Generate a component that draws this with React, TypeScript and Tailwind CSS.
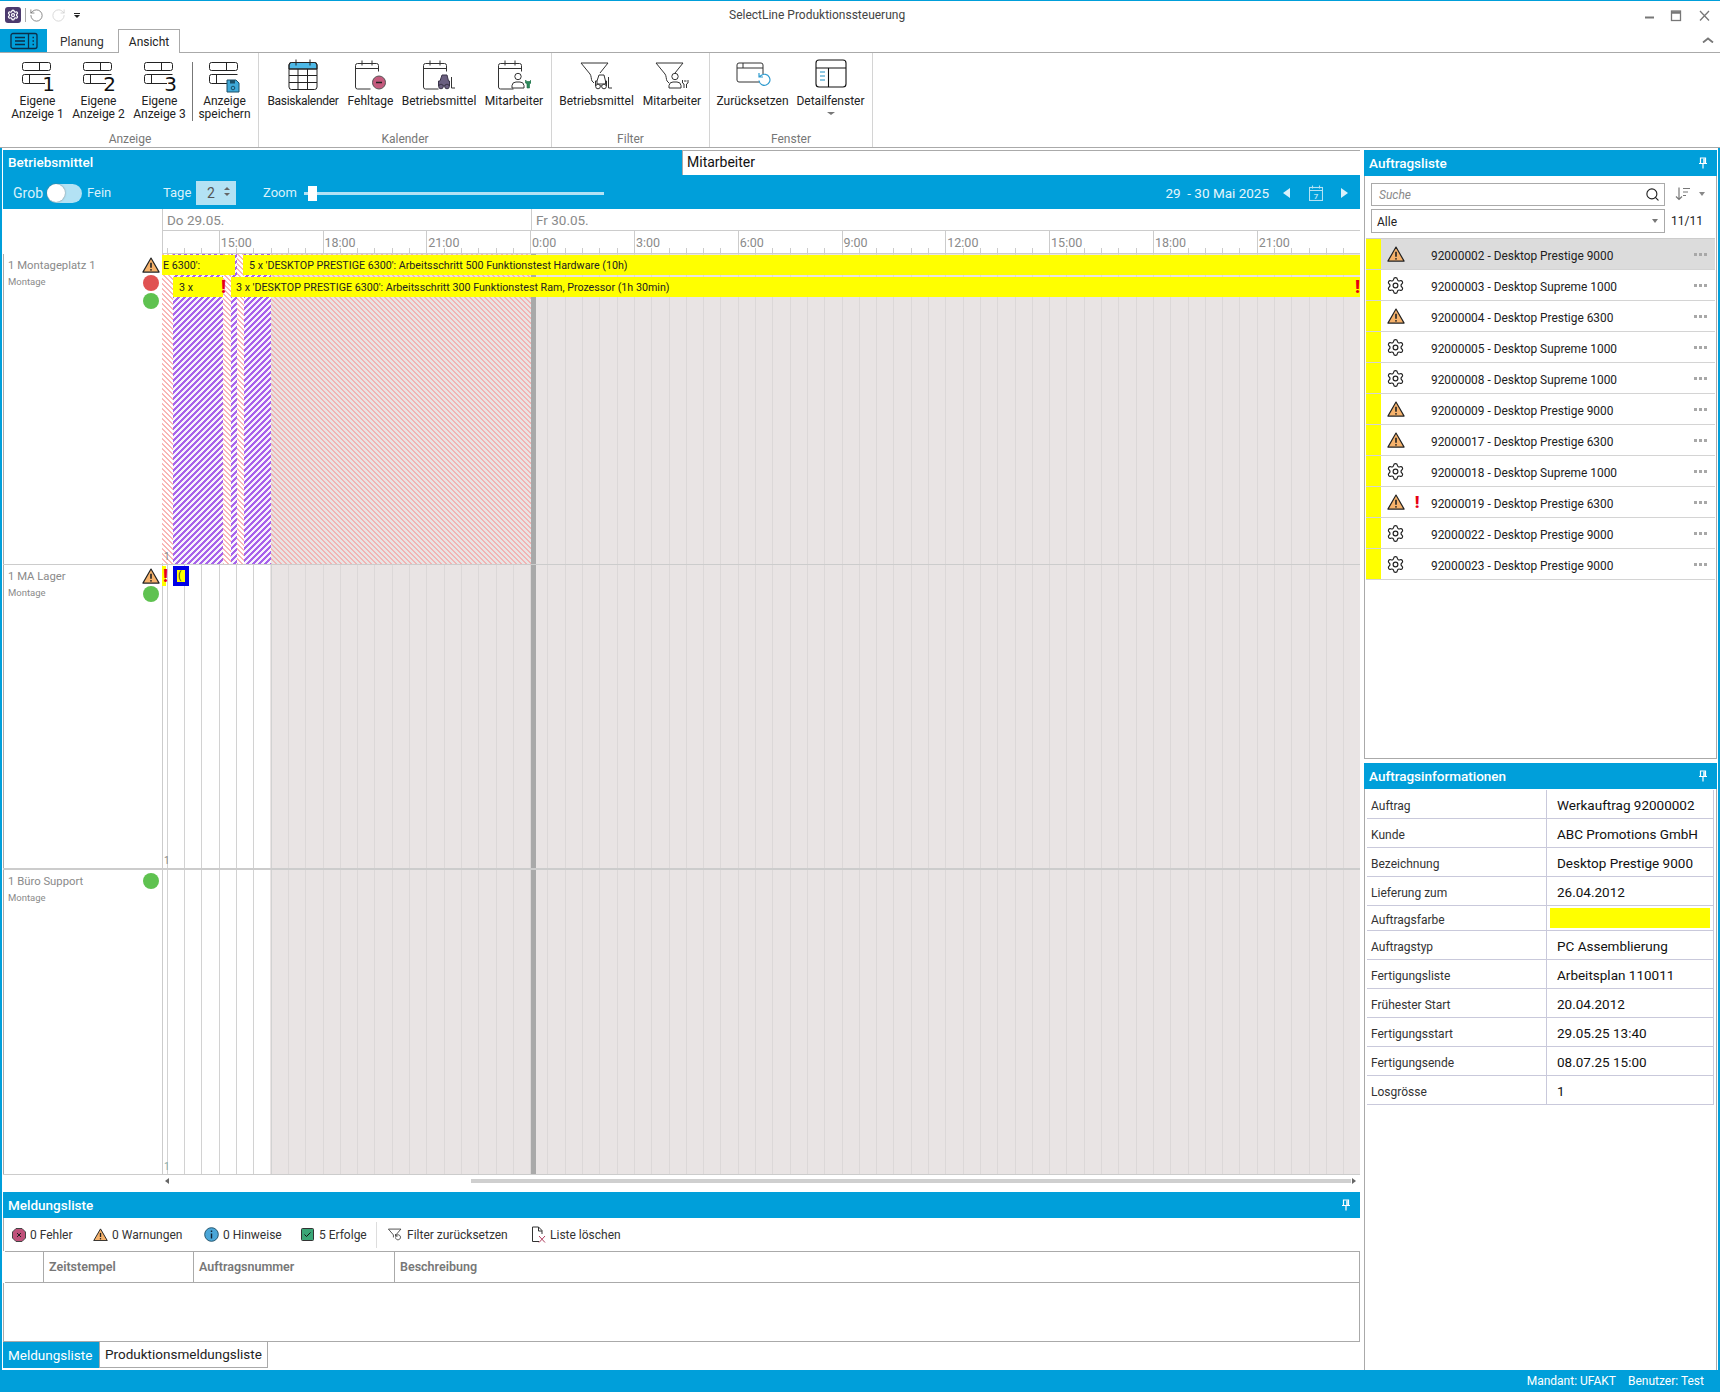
import React from "react";
import { Settings, Search, RotateCcw, RotateCw } from "lucide-react";

function Layers({ n, save }: { n?: string; save?: boolean }) {
  return (
    <svg width="38" height="36" viewBox="0 0 38 36" fill="none" stroke="#222" strokeWidth="1" className="overflow-visible">
      <rect x="3.500" y="3.500" width="28" height="8" rx="2" />
      <line x1="20.500" y1="3.500" x2="20.500" y2="11.500" />
      <path d="M26 24.500H5.500a2 2 0 0 1-2-2v-5a2 2 0 0 1 2-2H31.500" />
      <line x1="10.500" y1="15.500" x2="10.500" y2="24.500" />
      {n && <text x="36" y="32" textAnchor="end" fontSize="20" fill="#111" stroke="none" fontFamily="'DejaVu Sans',sans-serif">{n}</text>}
      {save && (
        <g>
          <path d="M21 21h9l3 3v9H21z" fill="#3fa9d8" stroke="#1a4f68" />
          <rect x="24" y="21" width="5" height="3.500" fill="#1a4f68" stroke="none" />
          <circle cx="27" cy="29" r="1.800" stroke="#1a4f68" />
        </g>
      )}
    </svg>
  );
}

function CalBase({ children }: { children?: React.ReactNode }) {
  return (
    <svg width="34" height="32" viewBox="0 0 34 32" fill="none" stroke="#333" strokeWidth="1">
      <path d="M3.500 4.500h19a2 2 0 0 1 2 2v6M3.500 4.500a2 2 0 0 0-2 2V28a2 2 0 0 0 2 2h13M1.500 9.500h23" />
      <path d="M8 1.500v5M18 1.500v5" />
      {children}
    </svg>
  );
}

function Forklift({ filled }: { filled?: boolean }) {
  const fill = filled ? "#6a5f80" : "none";
  const st = filled ? "#3a3448" : "#333";
  return (
    <g>
      <path d="M18 25v-3l2-6h5l1.500 6v3z" fill={fill} stroke={st} />
      <path d="M18 22h-1.500v5h11v-5h-1" fill={fill} stroke={st} />
      <circle cx="19" cy="27.500" r="2.300" fill={filled ? "#6a5f80" : "#fff"} stroke={st} />
      <circle cx="25" cy="27.500" r="2.300" fill={filled ? "#6a5f80" : "#fff"} stroke={st} />
      <path d="M29.500 18v11h3.500" stroke="#333" />
    </g>
  );
}

function Worker({ filled }: { filled?: boolean }) {
  return (
    <g>
      <circle cx="21" cy="17.500" r="3.200" />
      <path d="M15 29v-2.500a4 4 0 0 1 4-3.500h4a4 4 0 0 1 4 3.500V29z" />
      {filled ? (
        <path d="M28.500 21v3l1.500 1v4h2.500v-4l1.500-1v-3l-1 1.500h-3z" fill="#2d8a5b" stroke="#1e6e46" strokeWidth="0.600" />
      ) : (
        <path d="M28.500 21v3l1.500 1v4M34 21v3l-1.500 1v4M30 22h2.500" stroke="#333" />
      )}
    </g>
  );
}

function BasisCal() {
  return (
    <svg width="32" height="32" viewBox="0 0 32 32" fill="none" stroke="#222" strokeWidth="1">
      <path d="M2 10V6a2.500 2.500 0 0 1 2.500-2.500h23A2.500 2.500 0 0 1 30 6v4z" fill="#4db8e6" />
      <rect x="2" y="3.500" width="28" height="27" rx="2.500" />
      <path d="M2 10h28M2 16.500h28M2 23.500h28M11 10v20.500M20.500 10v20.500M9 0.500v6M23 0.500v6" />
    </svg>
  );
}

function Fehl() {
  return (
    <CalBase>
      <circle cx="25" cy="23.500" r="6.500" fill="#c45a7d" stroke="#555" />
      <path d="M22 23.500h6" stroke="#222" strokeWidth="1.500" />
    </CalBase>
  );
}

function FunnelIcon({ children }: { children?: React.ReactNode }) {
  return (
    <svg width="36" height="32" viewBox="0 0 36 32" fill="none" stroke="#333" strokeWidth="1">
      <path d="M2 4h27l-8 10M2 4l9 11c1.500 2 1 5 2 7l2 2" />
      {children}
    </svg>
  );
}

function ResetWin() {
  return (
    <svg width="36" height="32" viewBox="0 0 36 32" fill="none" stroke="#333" strokeWidth="1">
      <path d="M24 23H4a2 2 0 0 1-2-2V6a2 2 0 0 1 2-2h22a2 2 0 0 1 2 2v9M2 9h26M8 4v5" />
      <path d="M24 21.500a5.500 5.500 0 1 0 2-5l-2 1.500M24 14v4h4" stroke="#2f9bcf" strokeWidth="1.200" />
    </svg>
  );
}

function DetailWin() {
  return (
    <svg width="32" height="30" viewBox="0 0 32 30" fill="none" stroke="#111" strokeWidth="1.100">
      <rect x="1" y="1" width="30" height="27" rx="3" />
      <path d="M1 9h30M13.500 9v19" />
      <path d="M5 13h5M5 17h5M5 21h5" stroke="#1c8fc4" />
    </svg>
  );
}

function RibbonButton({ w, icon, label, arrow, tight }: { w: string; icon: React.ReactNode; label: string[]; arrow?: boolean; tight?: boolean }) {
  return (
    <div className={`${w} flex flex-col items-center shrink-0`}>
      <div className="h-[36px] flex items-start justify-center">{icon}</div>
      {label.map((l) => (
        <div key={l} className={`text-[12px] leading-[13px] text-[#222] whitespace-nowrap ${tight ? "tracking-[-0.3px]" : ""}`}>{l}</div>
      ))}
      {arrow && <div className="mt-[4px] w-0 h-0 border-x-[4px] border-x-transparent border-t-[3px] border-t-[#777]" />}
    </div>
  );
}

function RibbonGroup({ w, pad, title, children }: { w: string; pad: string; title: string; children: React.ReactNode }) {
  return (
    <div className={`${w} h-full border-r border-[#d4d4d4] flex flex-col shrink-0`}>
      <div className={`h-[78px] flex items-start pt-[6px] ${pad}`}>{children}</div>
      <div className="h-[16px] text-[12px] leading-[16px] text-[#777] text-center">{title}</div>
    </div>
  );
}

function Warn({ s = 18 }: { s?: number }) {
  return (
    <svg width={s} height={s * 0.9} viewBox="0 0 20 18">
      <path d="M10 1.200 19 16.800H1z" fill="#f6b26b" stroke="#222" strokeWidth="1.300" strokeLinejoin="round" />
      <path d="M10 6.500v5.500" stroke="#222" strokeWidth="1.800" />
      <circle cx="10" cy="14.300" r="1" fill="#222" />
    </svg>
  );
}

function Pin() {
  return (
    <svg width="10" height="12" viewBox="0 0 10 12" fill="none" stroke="#fff" strokeWidth="1.200">
      <path d="M2.500 1h5v5.500h-5zM1 6.500h8M5 7v4.500" />
      <path d="M6 1.500v5" strokeWidth="1.500" />
    </svg>
  );
}

function Dots() {
  return (
    <div className="flex gap-[2px] mr-[8px]">
      <i className="block w-[3px] h-[3px] bg-[#a8a8a8]" />
      <i className="block w-[3px] h-[3px] bg-[#a8a8a8]" />
      <i className="block w-[3px] h-[3px] bg-[#a8a8a8]" />
    </div>
  );
}

const orders: [string, "w" | "g", boolean?][] = [
  ["92000002 - Desktop Prestige 9000", "w"],
  ["92000003 - Desktop Supreme 1000", "g"],
  ["92000004 - Desktop Prestige 6300", "w"],
  ["92000005 - Desktop Supreme 1000", "g"],
  ["92000008 - Desktop Supreme 1000", "g"],
  ["92000009 - Desktop Prestige 9000", "w"],
  ["92000017 - Desktop Prestige 6300", "w"],
  ["92000018 - Desktop Supreme 1000", "g"],
  ["92000019 - Desktop Prestige 6300", "w", true],
  ["92000022 - Desktop Prestige 9000", "g"],
  ["92000023 - Desktop Prestige 9000", "g"],
];

const info: [string, string, number?][] = [
  ["Auftrag", "Werkauftrag 92000002"],
  ["Kunde", "ABC Promotions GmbH"],
  ["Bezeichnung", "Desktop Prestige 9000"],
  ["Lieferung zum", "26.04.2012"],
  ["Auftragsfarbe", "", 25],
  ["Auftragstyp", "PC Assemblierung"],
  ["Fertigungsliste", "Arbeitsplan 110011"],
  ["Frühester Start", "20.04.2012"],
  ["Fertigungsstart", "29.05.25 13:40"],
  ["Fertigungsende", "08.07.25 15:00"],
  ["Losgrösse", "1"],
];

const STEP = 17.3;
const ORIGIN = 56.7; // 15:00 relative to the timeline's left edge
const ticks = Array.from({ length: 70 }, (_, i) => ORIGIN - 3 * STEP + i * STEP).filter((x) => x > 0 && x < 1198);
const hours = ["15:00", "18:00", "21:00", "0:00", "3:00", "6:00", "9:00", "12:00", "15:00", "18:00", "21:00"];

function Lines({ hatched }: { hatched?: boolean }) {
  return (
    <>
      {ticks.map((x) => (
        <div key={x} className="absolute top-0 bottom-0 w-px" style={{ left: x, background: x < 109 && !hatched ? "#d2d2d2" : "#dcd8d8" }} />
      ))}
    </>
  );
}

const pinkWhite = "bg-[repeating-linear-gradient(45deg,#f9b6b6_0px,#f9b6b6_1.4px,#ffffff_1.4px,#ffffff_3.5355px)]";
const purple = "bg-[repeating-linear-gradient(135deg,#a763ea_0px,#a763ea_1.5px,#f8f3fd_1.5px,#f8f3fd_4.2426px)]";

function TimelineBg({ hatched }: { hatched?: boolean }) {
  return (
    <>
      <div className="absolute inset-y-0 left-[108px] right-0 bg-[#e9e4e4]" />
      <Lines hatched={hatched} />
      <div className="absolute inset-y-0 left-0 w-px bg-[#ccc]" />
      {hatched && (
        <div className="absolute inset-y-0 left-0 w-[369px] flex">
          <div className={`w-[11px] ${pinkWhite}`} />
          <div className={`w-[50px] ${purple}`} />
          <div className={`w-[8px] ${pinkWhite}`} />
          <div className={`w-[6px] ${purple}`} />
          <div className={`w-[7px] ${pinkWhite}`} />
          <div className={`w-[27px] ${purple}`} />
          <div className="flex-1 bg-[repeating-linear-gradient(45deg,#f2b4b4_0px,#f2b4b4_1.4px,#e9e4e4_1.4px,#e9e4e4_3.5355px)]" />
        </div>
      )}
      <div className="absolute inset-y-0 left-[369px] w-[5px] bg-[#a9a9a9]" />
    </>
  );
}

function ResourceLabel({ name, children }: { name: string; children: React.ReactNode }) {
  return (
    <div className="w-[159px] shrink-0 relative pl-[4px] pt-[3px] border-l border-[#aaa]">
      <div className="text-[11.300px] leading-[17px] text-[#8a8a8a] whitespace-nowrap">{name}</div>
      <div className="text-[9.500px] leading-[13px] text-[#8a8a8a] mt-[1px]">Montage</div>
      <div className="absolute right-[3px] top-[3px] flex flex-col items-center gap-[2px] w-[16px]">{children}</div>
    </div>
  );
}

const Dot = ({ c }: { c: string }) => <div className={`w-[16px] h-[16px] rounded-full ${c}`} />;

function Bar({ cls, children }: { cls: string; children?: React.ReactNode }) {
  return (
    <div className={`absolute bg-[#ffff00] h-[20px] overflow-hidden whitespace-nowrap text-[10.7px] leading-[21px] text-[#222] ${cls}`}>
      {children}
    </div>
  );
}

function Bang({ cls }: { cls: string }) {
  return <span className={`absolute text-[#e60012] font-black text-[18px] leading-[20px] ${cls}`}>!</span>;
}

function MsgBtn({ icon, label, w }: { icon: React.ReactNode; label: string; w: string }) {
  return (
    <div className={`${w} flex items-center shrink-0`}>
      <div className="w-[15px] h-[15px] flex items-center justify-center">{icon}</div>
      <span className="ml-[4px] text-[12px] text-[#333] whitespace-nowrap">{label}</span>
    </div>
  );
}

export default function App() {
  return (
    <div className="w-[1720px] h-[1392px] overflow-hidden bg-white flex flex-col border-t border-[#009fda] [font-family:Roboto,sans-serif]">
      {/* title bar */}
      <div className="h-[28px] shrink-0 relative flex items-center pl-[5px]">
        <div className="w-[16px] h-[16px] rounded-[3px] bg-[#4c3a6e] flex items-center justify-center mr-[4px]">
          <Settings size={12} color="#fff" strokeWidth={2.500} />
        </div>
        <div className="w-px h-[14px] bg-[#aaa] mr-[3px]" />
        <RotateCcw size={15} color="#666" strokeWidth={1.200} />
        <RotateCw size={15} color="#ccc" strokeWidth={1.200} className="ml-[7px]" />
        <div className="ml-[8px] flex flex-col items-center">
          <div className="w-[6px] h-px bg-[#222] mb-[1px]" />
          <div className="w-0 h-0 border-x-[3px] border-x-transparent border-t-[3px] border-t-[#222]" />
        </div>
        <div className="absolute left-[729px] top-[6px] text-[12px] leading-[16px] text-[#444]">SelectLine Produktionssteuerung</div>
        <div className="absolute right-[10px] top-[9px] flex items-center">
          <svg width="66" height="12" viewBox="0 0 66 12" fill="none" stroke="#777" strokeWidth="1.300">
            <path d="M1 7.500h9" strokeWidth="2" />
            <rect x="27.500" y="1" width="9" height="9.500" />
            <path d="M27 2.500h10" strokeWidth="2.500" />
            <path d="M56 1l9 9.500M65 1l-9 9.500" />
          </svg>
        </div>
      </div>
      {/* tabs */}
      <div className="h-[23px] shrink-0 flex relative">
        <div className="w-[47px] bg-[#009fda] flex items-center justify-center">
          <svg width="28" height="18" viewBox="0 0 28 18" fill="none" stroke="#0b2f4a" strokeWidth="1.300">
            <rect x="1" y="1.500" width="26" height="15" rx="2" />
            <path d="M18.500 1.500v15" />
            <path d="M5 5.500h10M5 9h10M5 12.500h10M22.500 5.500h1.500M22.500 9h1.500M22.500 12.500h1.500" strokeWidth="1.600" />
          </svg>
        </div>
        <div className="w-[71px] pl-[13px] text-[12px] leading-[26px] text-[#333]">Planung</div>
        <div className="w-[62px] relative z-10 border border-b-0 border-[#aaa] bg-white text-center text-[12px] leading-[25px] text-[#222] h-[24px]">Ansicht</div>
        <div className="absolute right-[6px] top-[8px]">
          <svg width="12" height="6" viewBox="0 0 12 6" fill="none" stroke="#777" strokeWidth="1.800"><path d="M1 5.500 6 1.500l5 4" /></svg>
        </div>
      </div>
      {/* ribbon */}
      <div className="h-[96px] shrink-0 border-y border-[#aaa] flex pl-[2px]">
        <RibbonGroup w="w-[257px]" pad="pl-[5px]" title="Anzeige">
          <RibbonButton w="w-[61px]" icon={<Layers n="1" />} label={["Eigene", "Anzeige 1"]} />
          <RibbonButton w="w-[61px]" icon={<Layers n="2" />} label={["Eigene", "Anzeige 2"]} />
          <RibbonButton w="w-[61px]" icon={<Layers n="3" />} label={["Eigene", "Anzeige 3"]} />
          <div className="w-px h-[59px] bg-[#777] ml-[2px] mr-[1px] mt-[3px]" />
          <RibbonButton w="w-[61px]" icon={<Layers save />} label={["Anzeige", "speichern"]} />
        </RibbonGroup>
        <RibbonGroup w="w-[293px]" pad="pl-[7px]" title="Kalender">
          <RibbonButton w="w-[74px]" tight icon={<BasisCal />} label={["Basiskalender"]} />
          <RibbonButton w="w-[61px]" icon={<Fehl />} label={["Fehltage"]} />
          <RibbonButton w="w-[76px]" icon={<CalBase><Forklift filled /></CalBase>} label={["Betriebsmittel"]} />
          <RibbonButton w="w-[74px]" icon={<CalBase><Worker filled /></CalBase>} label={["Mitarbeiter"]} />
        </RibbonGroup>
        <RibbonGroup w="w-[158px]" pad="pl-[7px]" title="Filter">
          <RibbonButton w="w-[75px]" icon={<FunnelIcon><Forklift /></FunnelIcon>} label={["Betriebsmittel"]} />
          <RibbonButton w="w-[76px]" icon={<FunnelIcon><Worker /></FunnelIcon>} label={["Mitarbeiter"]} />
        </RibbonGroup>
        <RibbonGroup w="w-[163px]" pad="pl-[7px]" title="Fenster">
          <RibbonButton w="w-[71px]" icon={<ResetWin />} label={["Zurücksetzen"]} />
          <RibbonButton w="w-[85px]" icon={<DetailWin />} label={["Detailfenster"]} arrow />
        </RibbonGroup>
      </div>
      {/* main */}
      <div className="h-[1222px] shrink-0 flex pt-[2px] pl-[1px] pr-[1px] border-x-2 border-x-[#009fda]">
        {/* left column */}
        <div className="w-[1357px] shrink-0 flex flex-col">
          <div className="h-[25px] flex shrink-0">
            <div className="w-[679px] bg-[#009fda] pl-[5px] text-[13.500px] font-medium leading-[24px] text-white">Betriebsmittel</div>
            <div className="flex-1 border-t border-l border-[#aaa] pl-[4px] text-[14px] leading-[23px] text-[#111]">Mitarbeiter</div>
          </div>
          <div className="h-[34px] bg-[#009fda] flex items-center shrink-0 pt-[2px] text-[13px] text-[#d9f1fb] relative">
            <span className="ml-[10px] w-[34px] text-[14px]">Grob</span>
            <div className="w-[35px] h-[19px] rounded-full bg-[#b3e2f4] flex items-center">
              <div className="w-[18px] h-[18px] rounded-full bg-white shadow-[0_0_2px_#777]" />
            </div>
            <span className="ml-[5px] w-[76px]">Fein</span>
            <span className="w-[33px]">Tage</span>
            <div className="w-[40px] h-[24px] bg-[#b3e2f4] flex items-center pl-[11px] text-[#555] text-[14px] relative">
              2
              <div className="absolute right-[6px] top-[6px] flex flex-col gap-[3px]">
                <div className="w-0 h-0 border-x-[3px] border-x-transparent border-b-[3px] border-b-[#666]" />
                <div className="w-0 h-0 border-x-[3px] border-x-transparent border-t-[3px] border-t-[#666]" />
              </div>
            </div>
            <span className="ml-[27px] w-[41px]">Zoom</span>
            <div className="w-[300px] h-[3px] bg-[#b3e2f4] relative">
              <div className="absolute left-[4px] -top-[6px] w-[9px] h-[15px] bg-white" />
            </div>
            <span className="ml-auto mr-[14px] text-[13.500px] text-[#e6f6fc] whitespace-pre">29  - 30 Mai 2025</span>
            <div className="w-0 h-0 border-y-[5px] border-y-transparent border-r-[7px] border-r-[#d9f1fb] mr-[19px]" />
            <svg width="14" height="16" viewBox="0 0 14 16" fill="none" stroke="#b3e2f4" strokeWidth="1.100" className="mr-[18px]">
              <rect x="0.500" y="2.500" width="13" height="13" />
              <path d="M0.500 5.500h13M3.500 0.500v3M10.500 0.500v3" />
              <text x="7" y="13.500" textAnchor="middle" fontSize="8" fill="#b3e2f4" stroke="none" fontWeight="700">7</text>
            </svg>
            <div className="w-0 h-0 border-y-[5px] border-y-transparent border-l-[7px] border-l-[#d9f1fb] mr-[12px]" />
          </div>
          {/* date header */}
          <div className="h-[45px] shrink-0 flex">
            <div className="w-[159px] shrink-0" />
            <div className="flex-1 relative overflow-hidden border-b border-[#ccc]">
              <div className="h-[22px] border-b border-[#ccc] relative text-[13.500px] leading-[22px] text-[#8a8a8a]">
                <div className="absolute left-0 inset-y-0 w-px bg-[#ccc]" />
                <div className="absolute left-[369px] inset-y-0 w-px bg-[#ccc]" />
                <span className="absolute left-[5px]">Do 29.05.</span>
                <span className="absolute left-[374px]">Fr 30.05.</span>
              </div>
              <div className="absolute left-0 top-[22px] bottom-0 w-px bg-[#ccc]" />
              {ticks.map((x) => (
                <div key={x} className="absolute bottom-0 h-[5px] w-px bg-[#ccc]" style={{ left: x }} />
              ))}
              {hours.map((h, i) => (
                <div key={i} className="absolute top-[22px] bottom-0 border-l border-[#ccc] pl-[1px] text-[12.500px] leading-[24px] text-[#8a8a8a]" style={{ left: ORIGIN + i * 103.8 }}>
                  {h}
                </div>
              ))}
            </div>
          </div>
          {/* rows */}
          <div className="h-[311px] shrink-0 flex border-b border-[#ccc]">
            <ResourceLabel name="1 Montageplatz 1">
              <Warn />
              <Dot c="bg-[#e05252]" />
              <Dot c="bg-[#5fc250]" />
            </ResourceLabel>
            <div className="flex-1 relative overflow-hidden">
              <TimelineBg hatched />
              <Bar cls="left-0 top-px w-[73px] pl-[1px]">E 6300':</Bar>
              <Bar cls="left-[81px] top-px right-0 pl-[6px]">5 x 'DESKTOP PRESTIGE 6300': Arbeitsschritt 500 Funktionstest Hardware (10h)</Bar>
              <Bar cls="left-[11px] top-[23px] w-[50px] pl-[6px]">3 x</Bar>
              <Bang cls="left-[59px] top-[23px]" />
              <Bar cls="left-[69px] top-[23px] right-0 pl-[5px]">3 x 'DESKTOP PRESTIGE 6300': Arbeitsschritt 300 Funktionstest Ram, Prozessor (1h 30min)</Bar>
              <Bang cls="right-[0px] top-[23px]" />
              <span className="absolute left-[2px] bottom-[1px] text-[10px] leading-[12px] text-[#888]">1</span>
            </div>
          </div>
          <div className="h-[305px] shrink-0 flex border-b-2 border-[#ccc]">
            <ResourceLabel name="1 MA Lager">
              <Warn />
              <Dot c="bg-[#5fc250]" />
            </ResourceLabel>
            <div className="flex-1 relative overflow-hidden">
              <TimelineBg />
              <div className="absolute left-0 top-px w-[4px] h-[20px] bg-[#ffff00]" />
              <Bang cls="left-[1px] top-px" />
              <div className="absolute left-[11px] top-px w-[16px] h-[20px] bg-[#0000e6] p-[4px]">
                <div className="w-[8px] h-[12px] bg-[#ffff00] text-[10px] leading-[12px] text-[#333] pl-px overflow-hidden">(</div>
              </div>
              <span className="absolute left-[2px] bottom-[1px] text-[10px] leading-[12px] text-[#888]">1</span>
            </div>
          </div>
          <div className="h-[305px] shrink-0 flex border-b border-[#ccc]">
            <ResourceLabel name="1 Büro Support">
              <Dot c="bg-[#5fc250]" />
            </ResourceLabel>
            <div className="flex-1 relative overflow-hidden">
              <TimelineBg />
              <span className="absolute left-[2px] bottom-[1px] text-[10px] leading-[12px] text-[#8aa]">1</span>
            </div>
          </div>
          {/* scroll */}
          <div className="h-[17px] shrink-0 relative">
            <div className="absolute left-[162px] top-[3px] w-0 h-0 border-y-[3px] border-y-transparent border-r-[4px] border-r-[#666]" />
            <div className="absolute left-[468px] top-[4px] w-[880px] h-[4px] bg-[#cfcfcf]" />
            <div className="absolute left-[1349px] top-[3px] w-0 h-0 border-y-[3px] border-y-transparent border-l-[4px] border-l-[#666]" />
          </div>
          {/* messages */}
          <div className="h-[26px] shrink-0 bg-[#009fda] flex items-center justify-between pl-[5px] pr-[9px] text-[13.500px] font-medium text-white">
            Meldungsliste
            <Pin />
          </div>
          <div className="h-[33px] shrink-0 flex items-center pl-[7px] border-l border-[#aaa]">
            <MsgBtn w="w-[82px]" label="0 Fehler" icon={
              <svg width="14" height="14" viewBox="0 0 14 14"><path d="M4 0.500h6L13.500 4v6L10 13.500H4L0.500 10V4z" fill="#c0507a" stroke="#444" /><path d="M5 5l4 4M9 5l-4 4" stroke="#222" /></svg>
            } />
            <MsgBtn w="w-[111px]" label="0 Warnungen" icon={<Warn s={15} />} />
            <MsgBtn w="w-[96px]" label="0 Hinweise" icon={
              <svg width="15" height="15" viewBox="0 0 15 15"><circle cx="7.500" cy="7.500" r="6.800" fill="#4aa6d8" stroke="#23566f" /><path d="M7.500 6.500v5M7.500 3.500v1.500" stroke="#123" strokeWidth="1.400" /></svg>
            } />
            <MsgBtn w="w-[76px]" label="5 Erfolge" icon={
              <svg width="13" height="13" viewBox="0 0 13 13"><rect x="0.500" y="0.500" width="12" height="12" rx="1" fill="#3aa676" stroke="#333" /><path d="M3.500 6.500l2 2 4-4" stroke="#111" fill="none" /></svg>
            } />
            <div className="w-px h-[26px] bg-[#ddd] mr-[11px]" />
            <MsgBtn w="w-[143px]" label="Filter zurücksetzen" icon={
              <svg width="18" height="15" viewBox="0 0 18 15" fill="none" stroke="#333"><path d="M0.500 1h15l-6 7M0.500 1l6 7v3" /><path d="M9 11a3 3 0 1 0 1-2.400L9 9.500M9 7v2.500h2.500" /></svg>
            } />
            <MsgBtn w="w-[100px]" label="Liste löschen" icon={
              <svg width="15" height="17" viewBox="0 0 15 17" fill="none" stroke="#333"><path d="M8 15.500H1.500V1h6l3.500 3.500V8M7.500 1v4H11" /><path d="M8 10l6 6.500M14 10l-6 6.500" stroke="#b04060" /></svg>
            } />
          </div>
          <div className="h-[32px] shrink-0 flex border-y border-[#aaa] ml-[2px] text-[12.500px] font-semibold text-[#777] leading-[30px]">
            <div className="w-[39px] border-r border-[#aaa]" />
            <div className="w-[150px] border-r border-[#aaa] pl-[5px]">Zeitstempel</div>
            <div className="w-[201px] border-r border-[#aaa] pl-[5px]">Auftragsnummer</div>
            <div className="flex-1 pl-[5px] border-r border-[#aaa]">Beschreibung</div>
          </div>
          <div className="h-[59px] shrink-0 border-x border-b border-[#aaa]" />
          <div className="h-[26px] shrink-0 flex text-[13.500px] leading-[26px]">
            <div className="w-[96px] bg-[#009fda] text-white pl-[5px]">Meldungsliste</div>
            <div className="w-[169px] border border-t-0 border-[#aaa] pl-[5px] text-[#222] leading-[24px]">Produktionsmeldungsliste</div>
          </div>
        </div>
        {/* right column */}
        <div className="w-[353px] shrink-0 ml-[4px] flex flex-col">
          <div className="h-[26px] shrink-0 bg-[#009fda] flex items-center justify-between pl-[5px] pr-[9px] text-[13.500px] font-medium text-white">
            Auftragsliste
            <Pin />
          </div>
          <div className="h-[583px] shrink-0 border-x border-b border-[#aaa] flex flex-col">
            <div className="flex h-[30px] items-end pl-[6px] shrink-0">
              <div className="w-[294px] h-[23px] border border-[#aaa] flex items-center justify-between pl-[7px] pr-[4px] text-[12px] italic text-[#8a8a8a]">
                Suche
                <Search size={15} color="#222" strokeWidth={1.800} />
              </div>
              <div className="ml-[10px] mb-[5px] flex items-center gap-[8px]">
                <svg width="16" height="14" viewBox="0 0 16 14" fill="none" stroke="#777" strokeWidth="1.200">
                  <path d="M4 0.500v12M1 9.500l3 3 3-3M8 1.500h7M8 5h5M8 8.500h3" />
                </svg>
                <div className="w-0 h-0 border-x-[3px] border-x-transparent border-t-[4px] border-t-[#888]" />
              </div>
            </div>
            <div className="flex h-[32px] items-start pl-[6px] pt-[3px] shrink-0">
              <div className="w-[294px] h-[24px] border border-[#aaa] flex items-center justify-between pl-[5px] pr-[6px] text-[12px] text-[#222]">
                <span className="pt-px">Alle</span>
                <div className="w-0 h-0 border-x-[3px] border-x-transparent border-t-[4px] border-t-[#777]" />
              </div>
              <div className="ml-[4px] text-[12px] leading-[24px] text-[#222] w-[36px] text-center">11/11</div>
            </div>
            <div className="border-t border-[#ccc] ml-px mr-px">
              {orders.map(([t, k, b], i) => (
                <div key={t} className={`h-[31px] flex items-center border-b border-[#d4d4d4] ${i === 0 ? "bg-[#dcdcdc]" : ""}`}>
                  <div className="w-[15px] h-full bg-[#ffff00] shrink-0" />
                  <div className="w-[28px] flex justify-center pl-[1px] shrink-0">
                    {k === "w" ? <Warn /> : <Settings size={19} color="#222" strokeWidth={1.500} />}
                  </div>
                  <div className="w-[16px] text-center text-[#e60012] font-black text-[17px] leading-[16px] shrink-0">{b ? "!" : ""}</div>
                  <div className="ml-[6px] pt-[5px] text-[11.900px] text-[#222] whitespace-nowrap">{t}</div>
                  <div className="ml-auto"><Dots /></div>
                </div>
              ))}
            </div>
          </div>
          <div className="h-[26px] mt-[4px] shrink-0 bg-[#009fda] flex items-center justify-between pl-[5px] pr-[9px] text-[13.500px] font-medium text-white">
            Auftragsinformationen
            <Pin />
          </div>
          <div className="h-[583px] shrink-0 border-x border-b border-[#aaa] px-[2px]">
            <div className="mt-px">
              {info.map(([l, v, h]) => (
                <div key={l} className={`flex border-b border-[#c9c9db] ${h ? "h-[25px]" : "h-[29px]"}`}>
                  <div className="w-[180px] shrink-0 border-r border-[#c9c9db] pl-[4px] pt-[3px] flex items-center text-[12px] text-[#333]">{l}</div>
                  <div className={`flex-1 border-r border-[#c9c9db] text-[13.500px] text-[#111] flex items-center ${h ? "py-[2px] px-[3px]" : "pl-[10px] pt-[3px]"}`}>
                    {h ? <div className="w-full h-full bg-[#ffff00]" /> : v}
                  </div>
                </div>
              ))}
            </div>
          </div>
        </div>
      </div>
      {/* status */}
      <div className="flex-1 bg-[#009fda] flex items-center justify-end pr-[16px] text-[12px] text-white gap-[12px]">
        <span>Mandant: UFAKT</span>
        <span>Benutzer: Test</span>
      </div>
    </div>
  );
}
